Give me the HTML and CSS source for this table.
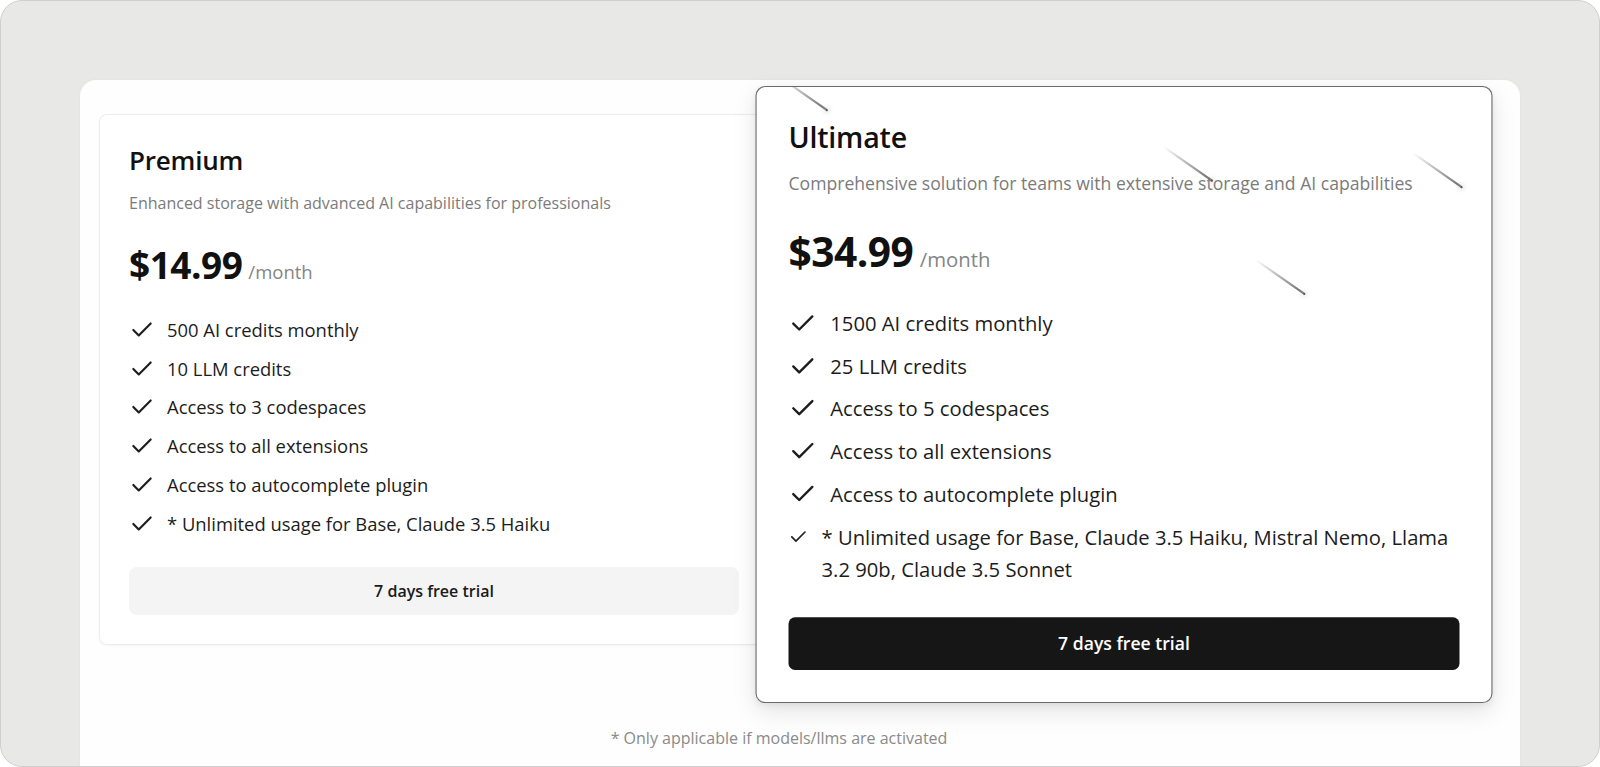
FILE: index.html
```html
<!DOCTYPE html>
<html lang="en">
<head>
<meta charset="utf-8">
<title>Pricing</title>
<link rel="stylesheet" href="styles.css">
</head>
<body>
<div class="frame">
  <main class="panel">
    <div class="plans">
      <section class="plan">
        <h2 class="plan-title">Premium</h2>
        <p class="plan-desc">Enhanced storage with advanced AI capabilities for professionals</p>
        <div class="plan-price"><span class="amount">$14.99</span><span class="period">/month</span></div>
        <ul class="features">
          <li class="feature"><svg class="check" viewBox="0 0 24 24"><path d="M20 6 9 17l-5-5"/></svg><span>500 AI credits monthly</span></li>
          <li class="feature"><svg class="check" viewBox="0 0 24 24"><path d="M20 6 9 17l-5-5"/></svg><span>10 LLM credits</span></li>
          <li class="feature"><svg class="check" viewBox="0 0 24 24"><path d="M20 6 9 17l-5-5"/></svg><span>Access to 3 codespaces</span></li>
          <li class="feature"><svg class="check" viewBox="0 0 24 24"><path d="M20 6 9 17l-5-5"/></svg><span>Access to all extensions</span></li>
          <li class="feature"><svg class="check" viewBox="0 0 24 24"><path d="M20 6 9 17l-5-5"/></svg><span>Access to autocomplete plugin</span></li>
          <li class="feature"><svg class="check" viewBox="0 0 24 24"><path d="M20 6 9 17l-5-5"/></svg><span>* Unlimited usage for Base, Claude 3.5 Haiku</span></li>
        </ul>
        <button class="btn btn-light">7 days free trial</button>
      </section>
      <section class="plan plan-featured">
        <span class="meteor m1"></span>
        <span class="meteor m2"></span>
        <span class="meteor m3"></span>
        <span class="meteor m4"></span>
        <h2 class="plan-title">Ultimate</h2>
        <p class="plan-desc">Comprehensive solution for teams with extensive storage and AI capabilities</p>
        <div class="plan-price"><span class="amount">$34.99</span><span class="period">/month</span></div>
        <ul class="features">
          <li class="feature"><svg class="check" viewBox="0 0 24 24"><path d="M20 6 9 17l-5-5"/></svg><span>1500 AI credits monthly</span></li>
          <li class="feature"><svg class="check" viewBox="0 0 24 24"><path d="M20 6 9 17l-5-5"/></svg><span>25 LLM credits</span></li>
          <li class="feature"><svg class="check" viewBox="0 0 24 24"><path d="M20 6 9 17l-5-5"/></svg><span>Access to 5 codespaces</span></li>
          <li class="feature"><svg class="check" viewBox="0 0 24 24"><path d="M20 6 9 17l-5-5"/></svg><span>Access to all extensions</span></li>
          <li class="feature"><svg class="check" viewBox="0 0 24 24"><path d="M20 6 9 17l-5-5"/></svg><span>Access to autocomplete plugin</span></li>
          <li class="feature"><svg class="check check-shrunk" viewBox="0 0 24 24"><path d="M20 6 9 17l-5-5"/></svg><span>* Unlimited usage for Base, Claude 3.5 Haiku, Mistral Nemo, Llama 3.2 90b, Claude 3.5 Sonnet</span></li>
        </ul>
        <button class="btn btn-dark">7 days free trial</button>
      </section>
    </div>
    <p class="footnote">* Only applicable if models/llms are activated</p>
  </main>
</div>
</body>
</html>
```

FILE: styles.css
```css
* { box-sizing: border-box; }

html, body {
  margin: 0;
  padding: 0;
  background: #ffffff;
}

body {
  font-family: "Open Sans", "Noto Sans", sans-serif;
  color: #161616;
}

.frame {
  height: 767px;
  border: 1px solid #cfcfcd;
  border-radius: 22px;
  background: #e8e8e6;
  padding: 79px 79px 0 79px;
  overflow: hidden;
  display: flex;
  flex-direction: column;
}

.panel {
  flex: 1;
  background: #fefefe;
  border-radius: 16px 16px 0 0;
  box-shadow: 0 0 3px rgba(0, 0, 0, 0.04);
  padding: 34px 0 0 19px;
}

.plans {
  display: grid;
  grid-template-columns: 670px 670px;
  column-gap: 20px;
  align-items: start;
  width: 1360px;
}

.plan {
  position: relative;
  background: #ffffff;
  border: 1px solid #ececec;
  border-radius: 8px;
  box-shadow: 0 1px 3px rgba(0, 0, 0, 0.04);
  padding: 29px;
  display: flex;
  flex-direction: column;
}

.plan-featured {
  border: 1px solid #6a6a6a;
  border-radius: 9px;
  transform: scale(1.1);
  z-index: 1;
  overflow: hidden;
  box-shadow: 0 8px 22px rgba(0, 0, 0, 0.10), 0 2px 6px rgba(0, 0, 0, 0.06);
}

.plan-title {
  margin: 0;
  font-size: 26px;
  line-height: 32px;
  font-weight: 600;
  color: #111111;
  letter-spacing: -0.2px;
}

.plan-desc {
  margin: 15px 0 0 0;
  font-size: 16px;
  line-height: 24px;
  color: #7b7b7b;
}

.plan-price {
  margin-top: 28px;
  display: flex;
  align-items: baseline;
  gap: 6px;
  line-height: 44px;
}

.amount {
  font-size: 37px;
  font-weight: 700;
  color: #111111;
  letter-spacing: -0.5px;
}

.period {
  font-size: 18.5px;
  color: #858585;
}

.features {
  list-style: none;
  margin: 21px 0 0 0;
  padding: 0;
  display: flex;
  flex-direction: column;
  gap: 9px;
}

.feature {
  display: flex;
  align-items: flex-start;
  gap: 12px;
  font-size: 18.4px;
  line-height: 29.7px;
  color: #1c1c1c;
}

.check {
  flex-shrink: 0;
  width: 26px;
  height: 26px;
  margin-top: 2px;
  fill: none;
  stroke: #1e1e1e;
  stroke-width: 2;
  stroke-linecap: round;
  stroke-linejoin: round;
}

.check-shrunk {
  width: 18px;
}

.btn {
  margin-top: 29px;
  height: 48px;
  border: none;
  border-radius: 8px;
  font-family: inherit;
  font-size: 16px;
  font-weight: 600;
  cursor: pointer;
}

.btn-light {
  background: #f4f4f4;
  color: #1a1a1a;
}

.btn-dark {
  background: #161616;
  color: #ffffff;
  border-radius: 6px;
}

.meteor {
  position: absolute;
  width: 54px;
  height: 1.5px;
  border-radius: 1px;
  background: linear-gradient(to right, rgba(110, 110, 110, 0), rgba(90, 90, 90, 0.9));
  transform-origin: 100% 50%;
  transform: rotate(35deg);
}

.meteor::after {
  content: "";
  position: absolute;
  right: -1px;
  top: -0.5px;
  width: 2.5px;
  height: 2.5px;
  border-radius: 50%;
  background: #555555;
  box-shadow: 0 0 4px 2px rgba(200, 200, 200, 0.4);
}

.m1 { left: 9.6px; top: 20px; }
.m2 { left: 360px; top: 84px; }
.m3 { left: 586.6px; top: 90px; }
.m4 { left: 443.8px; top: 186.5px; }

.footnote {
  width: 1360px;
  margin: 51px 0 0 0;
  text-align: center;
  font-size: 16px;
  line-height: 24px;
  color: #8a8a8a;
}
```
